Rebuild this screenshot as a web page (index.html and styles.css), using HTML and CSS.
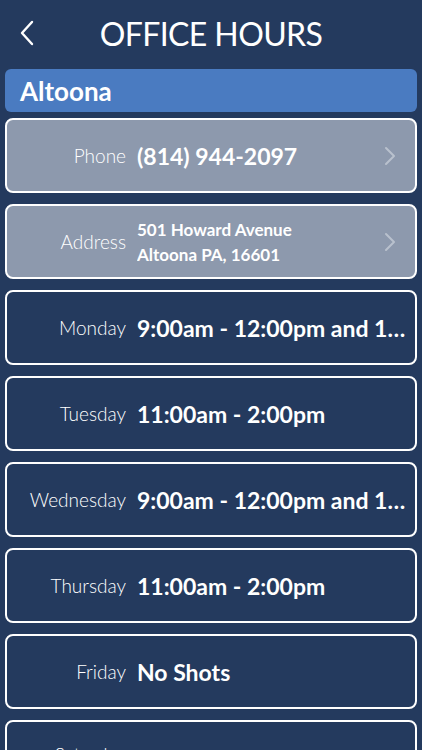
FILE: index.html
```html
<!DOCTYPE html>
<html lang="en">
<head>
  <meta charset="UTF-8" />
  <meta name="viewport" content="width=device-width, initial-scale=1.0" />
  <title>Office Hours</title>
  <link rel="stylesheet" href="styles.css">
</head>
<body>
  <header class="topbar">
    <button class="back" aria-label="Back">
      <svg width="14" height="26" viewBox="0 0 14 26">
        <path d="M12 2 L2 13 L12 24" fill="none" stroke="#fff" stroke-width="2.4" stroke-linecap="round" stroke-linejoin="round"/>
      </svg>
    </button>
    <h1 class="title">OFFICE HOURS</h1>
  </header>

  <main class="list">
    <div class="section">Altoona</div>

    <a class="row link">
      <span class="label">Phone</span>
      <span class="value">(814) 944-2097</span>
      <span class="chev">
        <svg width="12" height="20" viewBox="0 0 12 20">
          <path d="M2 2 L10 10 L2 18" fill="none" stroke="#b9c1cd" stroke-width="2" stroke-linecap="round" stroke-linejoin="round"/>
        </svg>
      </span>
    </a>

    <a class="row link">
      <span class="label">Address</span>
      <span class="value small">501 Howard Avenue<br>Altoona PA, 16601</span>
      <span class="chev">
        <svg width="12" height="20" viewBox="0 0 12 20">
          <path d="M2 2 L10 10 L2 18" fill="none" stroke="#b9c1cd" stroke-width="2" stroke-linecap="round" stroke-linejoin="round"/>
        </svg>
      </span>
    </a>

    <div class="row">
      <span class="label">Monday</span>
      <span class="value">9:00am - 12:00pm and 1:00pm - 4:00pm</span>
    </div>
    <div class="row">
      <span class="label">Tuesday</span>
      <span class="value">11:00am - 2:00pm</span>
    </div>
    <div class="row">
      <span class="label">Wednesday</span>
      <span class="value">9:00am - 12:00pm and 1:00pm - 4:00pm</span>
    </div>
    <div class="row">
      <span class="label">Thursday</span>
      <span class="value">11:00am - 2:00pm</span>
    </div>
    <div class="row">
      <span class="label">Friday</span>
      <span class="value">No Shots</span>
    </div>
    <div class="row top">
      <span class="label">Saturday</span>
    </div>
  </main>
</body>
</html>
```

FILE: styles.css
```css
* {
  margin: 0;
  padding: 0;
  box-sizing: border-box;
}

body {
  background: #243a5e;
  color: #fff;
  font-family: Lato, "Open Sans", sans-serif;
  overflow: hidden;
  height: 750px;
}

.topbar {
  height: 69px;
  display: flex;
  align-items: center;
  justify-content: center;
  position: relative;
}

.back {
  position: absolute;
  left: 20px;
  top: 20px;
  background: none;
  border: none;
  display: flex;
}

.title {
  font-size: 32px;
  font-weight: 400;
  letter-spacing: -0.6px;
  margin-top: -3px;
}

.list {
  padding: 0 5px;
  display: flex;
  flex-direction: column;
  gap: 11px;
}

.section {
  background: #4a7bc1;
  border-radius: 6px;
  height: 43px;
  padding: 0 15px;
  display: flex;
  align-items: center;
  font-size: 26px;
  font-weight: 700;
  margin-bottom: -5px;
}

.row {
  flex: 0 0 75px;
  height: 75px;
  border: 2px solid #fff;
  border-radius: 8px;
  display: flex;
  align-items: center;
  padding: 0 4px 0 0;
  gap: 11px;
}

.row.top {
  align-items: flex-start;
  padding-top: 21px;
}

.row.link {
  background: #8d99ad;
  padding-right: 19px;
}

.label {
  flex: 0 0 119px;
  text-align: right;
  font-size: 19px;
  font-weight: 300;
}

.value {
  flex: 1;
  min-width: 0;
  font-size: 23px;
  font-weight: 700;
  white-space: nowrap;
  overflow: hidden;
  text-overflow: ellipsis;
}

.value.small {
  font-size: 17px;
  line-height: 25px;
}

.chev {
  display: flex;
}
```
